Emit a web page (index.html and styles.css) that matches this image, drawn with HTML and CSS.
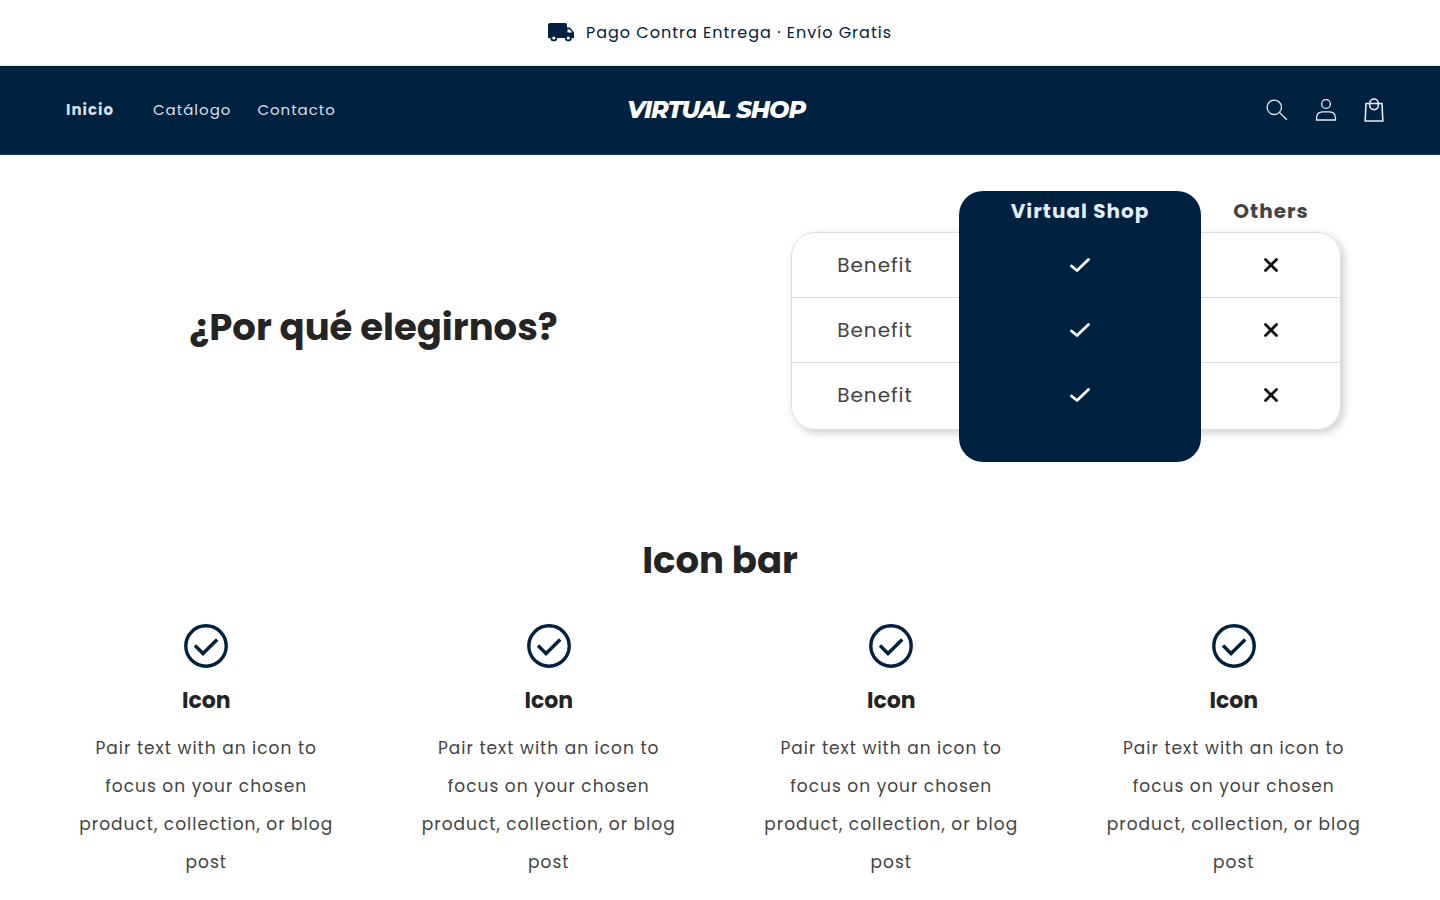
FILE: index.html
```html
<!DOCTYPE html>
<html lang="es">
<head>
<meta charset="utf-8">
<meta name="viewport" content="width=device-width, initial-scale=1">
<title>Virtual Shop</title>
<link rel="stylesheet" href="styles.css">
</head>
<body>
<svg class="sprite" aria-hidden="true">
  <symbol id="check" viewBox="0 0 20 16"><path d="M1.5 9 7 13.500 18.500 2.500" fill="none" stroke="currentColor" stroke-width="2.800" stroke-linecap="round" stroke-linejoin="round"/></symbol>
  <symbol id="cross" viewBox="0 0 14 14"><path d="M1.500 1.500l11 11M12.500 1.500l-11 11" fill="none" stroke="currentColor" stroke-width="2.800" stroke-linecap="round"/></symbol>
  <symbol id="circle-check" viewBox="0 0 44 44"><circle cx="22" cy="22" r="20.200" fill="none" stroke="currentColor" stroke-width="3.400"/><path d="M11 21.500 19 29.500 33.200 15.500" fill="none" stroke="currentColor" stroke-width="3.400"/></symbol>
</svg>

<div class="announcement">
  <svg class="truck" viewBox="0 0 26 20" aria-hidden="true">
    <path fill="currentColor" d="M2 1H17.500Q19 1 19 2.500V5.500H22L26 10.500V16H23.600A3.300 3.300 0 0 1 17 16H9.100A3.300 3.300 0 0 1 2.500 16H0V3Q0 1 2 1Z"/>
    <path fill="#fff" d="M19.500 7.200H21.500L24.200 10.600H19.500Z"/>
    <circle cx="5.800" cy="16" r="3.200" fill="currentColor"/>
    <circle cx="20.300" cy="16" r="3.200" fill="currentColor"/>
    <circle cx="5.800" cy="16" r="1.600" fill="#fff"/>
    <circle cx="20.300" cy="16" r="1.600" fill="#fff"/>
  </svg>
  <p class="announcement-text">Pago Contra Entrega · Envío Gratis</p>
</div>

<header class="header">
  <nav class="nav" aria-label="Principal">
    <a class="nav-link nav-home" href="#" aria-current="page">Inicio</a>
    <a class="nav-link" href="#">Catálogo</a>
    <a class="nav-link" href="#">Contacto</a>
  </nav>
  <a class="logo" href="#">VIRTUAL SHOP</a>
  <div class="tools">
    <button class="tool" type="button" aria-label="Buscar">
      <svg class="tool-icon" viewBox="0 0 24 24" fill="none" stroke="currentColor" stroke-width="1.300"><circle cx="8.300" cy="9.300" r="7.200"/><path d="M13.400 14.400 20.800 21.800"/></svg>
    </button>
    <a class="tool" href="#" aria-label="Iniciar sesión">
      <svg class="tool-icon" viewBox="0 0 24 24" fill="none" stroke="currentColor" stroke-width="1.300"><circle cx="12" cy="6" r="4.400"/><path d="M2.500 22V20.500C2.500 16.300 5 13.800 8.500 13.800H15.500C19 13.800 21.500 16.300 21.500 20.500V22Z"/></svg>
    </a>
    <a class="tool" href="#" aria-label="Carrito">
      <svg class="tool-icon" viewBox="0 0 24 24" fill="none" stroke="currentColor" stroke-width="1.600"><path d="M4 5.500H20L20.800 23H3.200Z"/><rect x="7.700" y="1" width="8.600" height="10.600" rx="4.300"/></svg>
    </a>
  </div>
</header>

<main>
  <section class="why">
    <h2 class="title">¿Por qué elegirnos?</h2>
    <div class="compare">
      <table class="table">
        <colgroup><col class="col-benefit"><col class="col-ours"><col class="col-others"></colgroup>
        <thead>
          <tr><td></td><th class="ours ours-top" scope="col">Virtual Shop</th><th scope="col">Others</th></tr>
        </thead>
        <tbody>
          <tr><th scope="row">Benefit</th><td class="ours"><svg class="check" role="img" aria-label="Sí"><use href="#check"/></svg></td><td><svg class="cross" role="img" aria-label="No"><use href="#cross"/></svg></td></tr>
          <tr><th scope="row">Benefit</th><td class="ours"><svg class="check" role="img" aria-label="Sí"><use href="#check"/></svg></td><td><svg class="cross" role="img" aria-label="No"><use href="#cross"/></svg></td></tr>
          <tr><th scope="row">Benefit</th><td class="ours"><svg class="check" role="img" aria-label="Sí"><use href="#check"/></svg></td><td><svg class="cross" role="img" aria-label="No"><use href="#cross"/></svg></td></tr>
        </tbody>
        <tfoot>
          <tr><td></td><td class="ours ours-bottom"></td><td></td></tr>
        </tfoot>
      </table>
    </div>
  </section>

  <section class="icon-bar">
    <h2 class="title">Icon bar</h2>
    <div class="icon-grid">
      <div class="item"><svg class="item-icon" aria-hidden="true"><use href="#circle-check"/></svg><h3 class="item-title">Icon</h3><p class="item-text">Pair text with an icon to focus on your chosen product, collection, or blog post</p></div>
      <div class="item"><svg class="item-icon" aria-hidden="true"><use href="#circle-check"/></svg><h3 class="item-title">Icon</h3><p class="item-text">Pair text with an icon to focus on your chosen product, collection, or blog post</p></div>
      <div class="item"><svg class="item-icon" aria-hidden="true"><use href="#circle-check"/></svg><h3 class="item-title">Icon</h3><p class="item-text">Pair text with an icon to focus on your chosen product, collection, or blog post</p></div>
      <div class="item"><svg class="item-icon" aria-hidden="true"><use href="#circle-check"/></svg><h3 class="item-title">Icon</h3><p class="item-text">Pair text with an icon to focus on your chosen product, collection, or blog post</p></div>
    </div>
  </section>
</main>
</body>
</html>
```
FILE: styles.css
```css
:root {
  --navy: #002140;
  --ink: #242424;
  --text: #434343;
  --line: #dedede;
}

*, *::before, *::after { box-sizing: border-box; }

body {
  margin: 0;
  background: #fff;
  color: var(--text);
  font-family: Poppins, Inter, sans-serif;
  letter-spacing: 1px;
}

h2, h3, p { margin: 0; }

.sprite { display: none; }

.announcement {
  display: flex;
  align-items: center;
  justify-content: center;
  gap: 12px;
  height: 66px;
  border-bottom: 1px solid #e2e5e8;
  color: var(--navy);
}
.truck { width: 26px; height: 20px; margin-bottom: 2px; }
.announcement-text { font-size: 16px; line-height: 24px; }

.header {
  display: grid;
  grid-template-columns: 1fr auto 1fr;
  align-items: center;
  min-height: 89px;
  padding: 0 44px 0 36px;
  background: var(--navy);
  border-bottom: 1px solid #1a3753;
  color: #fff;
}
.nav { display: flex; padding-left: 14px; }
.nav-link {
  padding: 12px 13px;
  color: #d5e0ea;
  font-size: 15px;
  line-height: 20px;
  text-decoration: none;
}
.nav-home { padding: 12px 26px 12px 16px; font-weight: 700; }
.logo {
  color: #fff;
  font-family: Montserrat, Inter, sans-serif;
  font-size: 24px;
  font-style: italic;
  font-weight: 800;
  line-height: 32px;
  letter-spacing: -1px;
  text-decoration: none;
}
.tools { display: flex; justify-content: flex-end; gap: 3px; }
.tool {
  display: flex;
  align-items: center;
  justify-content: center;
  width: 45px;
  height: 44px;
  padding: 0;
  border: 0;
  background: none;
  color: #e6eef5;
}
.tool-icon { width: 24px; height: 24px; }

.title {
  color: var(--ink);
  font-size: 37px;
  font-weight: 700;
  line-height: 48px;
  letter-spacing: 0;
  text-align: center;
}

.why {
  display: grid;
  grid-template-columns: 1fr 1fr;
  align-items: center;
  gap: 46px;
  padding: 36px 50px;
}
.compare { position: relative; margin: 0 49px 0 48px; }
.compare::before {
  content: "";
  position: absolute;
  inset: 41px 0 32px;
  border: 1px solid var(--line);
  border-radius: 24px;
  box-shadow: 3px 3px 8px rgba(0, 0, 0, 0.2);
}
.table {
  position: relative;
  width: 100%;
  border-collapse: separate;
  border-spacing: 0;
  table-layout: fixed;
  font-size: 20px;
  line-height: 24px;
  text-align: center;
}
.col-benefit { width: 168px; }
.col-ours { width: 44%; }
.table th, .table td { padding: 0; vertical-align: middle; }
.table thead tr { height: 41px; }
.table thead th { padding-bottom: 2px; }
.table tbody tr { height: 65px; }
.table tfoot tr { height: 35px; }
.table tbody th { font-weight: 400; }
.table tbody tr + tr > * { border-top: 1px solid var(--line); }
.table .ours { background: var(--navy); color: #e3edf7; }
.table tbody tr + tr > .ours { border-color: var(--navy); }
.table .ours-top { border-radius: 24px 24px 0 0; }
.table .ours-bottom { border-radius: 0 0 24px 24px; }
.check, .cross { display: block; margin: 0 auto; }
.check { width: 20px; height: 16px; color: #fff; }
.cross { width: 14px; height: 14px; color: #121212; }

.icon-bar { padding: 38px 50px; }
.icon-grid {
  display: grid;
  grid-template-columns: repeat(4, 1fr);
  gap: 30px;
  padding-top: 40px;
}
.item {
  display: flex;
  flex-direction: column;
  align-items: center;
  padding: 0 24px;
  text-align: center;
}
.item-icon { width: 44px; height: 44px; color: var(--navy); }
.item-title {
  padding: 17px 0 12px;
  color: var(--ink);
  font-size: 22px;
  font-weight: 700;
  line-height: 32px;
  letter-spacing: 0;
}
.item-text { font-size: 17px; line-height: 38px; }
```
